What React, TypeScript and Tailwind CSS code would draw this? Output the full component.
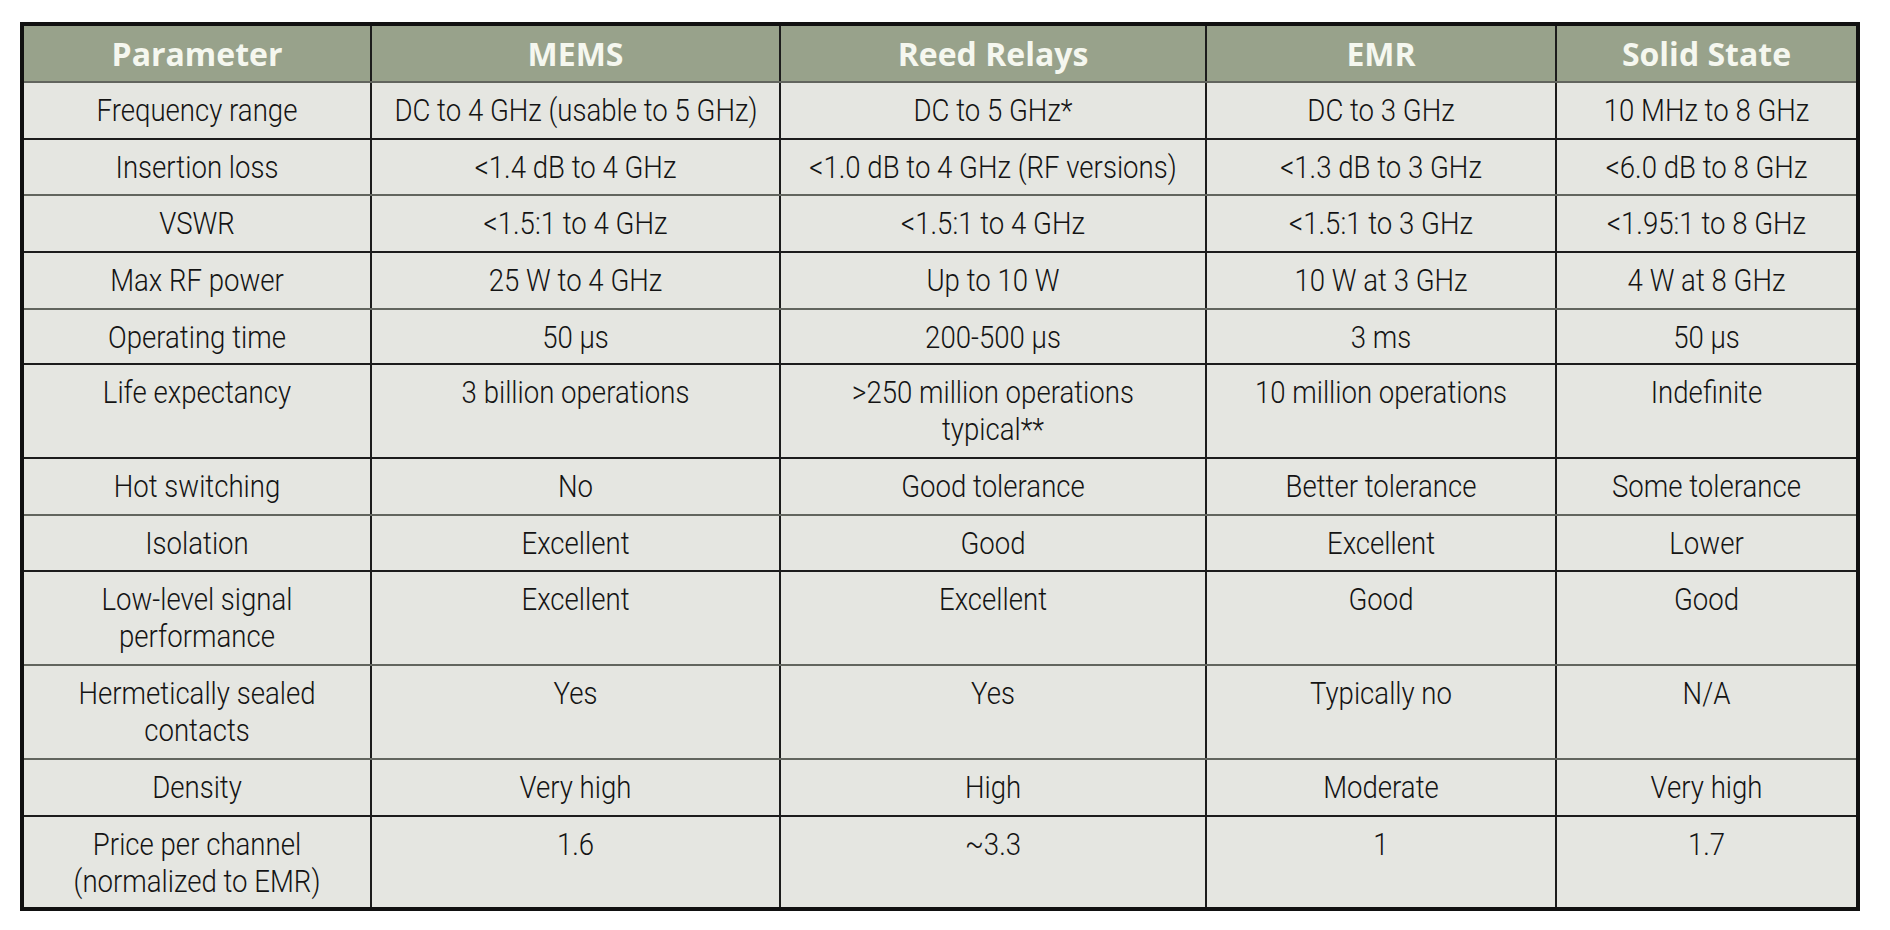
const GREY = 'border-[#62655e]';
const DARK = 'border-[#1c1c1c]';

const cols = ['w-[346px]', 'w-[409px]', 'w-[426px]', 'w-[350px]', 'w-[301px]'];

type Row = { cells: string[][]; line: string; h: string };

const rows: Row[] = [
  { cells: [['Frequency range'], ['DC to 4 GHz (usable to 5 GHz)'], ['DC to 5 GHz*'], ['DC to 3 GHz'], ['10 MHz to 8 GHz']], line: GREY, h: 'h-[56.5px]' },
  { cells: [['Insertion loss'], ['<1.4 dB to 4 GHz'], ['<1.0 dB to 4 GHz (RF versions)'], ['<1.3 dB to 3 GHz'], ['<6.0 dB to 8 GHz']], line: DARK, h: 'h-[56.5px]' },
  { cells: [['VSWR'], ['<1.5:1 to 4 GHz'], ['<1.5:1 to 4 GHz'], ['<1.5:1 to 3 GHz'], ['<1.95:1 to 8 GHz']], line: GREY, h: 'h-[57px]' },
  { cells: [['Max RF power'], ['25 W to 4 GHz'], ['Up to 10 W'], ['10 W at 3 GHz'], ['4 W at 8 GHz']], line: DARK, h: 'h-[56.5px]' },
  { cells: [['Operating time'], ['50 µs'], ['200-500 µs'], ['3 ms'], ['50 µs']], line: GREY, h: 'h-[55.5px]' },
  { cells: [['Life expectancy'], ['3 billion operations'], ['>250 million operations', 'typical**'], ['10 million operations'], ['Indefinite']], line: DARK, h: 'h-[94px]' },
  { cells: [['Hot switching'], ['No'], ['Good tolerance'], ['Better tolerance'], ['Some tolerance']], line: DARK, h: 'h-[56.5px]' },
  { cells: [['Isolation'], ['Excellent'], ['Good'], ['Excellent'], ['Lower']], line: GREY, h: 'h-[56.5px]' },
  { cells: [['Low-level signal', 'performance'], ['Excellent'], ['Excellent'], ['Good'], ['Good']], line: DARK, h: 'h-[94px]' },
  { cells: [['Hermetically sealed', 'contacts'], ['Yes'], ['Yes'], ['Typically no'], ['N/A']], line: GREY, h: 'h-[94px]' },
  { cells: [['Density'], ['Very high'], ['High'], ['Moderate'], ['Very high']], line: GREY, h: 'h-[57px]' },
  { cells: [['Price per channel', '(normalized to EMR)'], ['1.6'], ['~3.3'], ['1'], ['1.7']], line: DARK, h: 'h-[92px]' },
];

const headers = ['Parameter', 'MEMS', 'Reed Relays', 'EMR', 'Solid State'];

export default function App() {
  return (
    <div className="w-[1890px] h-[930px] bg-white pt-[22px] pl-[20px]">
      <div className="w-[1840px] border-[4px] border-[#111111] bg-[#e5e6e1]">
        {/* header */}
        <div className="flex h-[55px] bg-[#98a28b]">
          {headers.map((h, i) => (
            <div
              key={h}
              className={`${cols[i]} ${i > 0 ? 'border-l-2 border-[#1c1c1c]' : ''} flex items-center justify-center text-[32px] font-bold text-[#f5f7ef] font-['Open_Sans',sans-serif]`}
            >
              {h}
            </div>
          ))}
        </div>
        {rows.map((r, ri) => (
          <div key={ri} className={`flex border-t-2 ${r.line} ${r.h}`}>
            {r.cells.map((c, ci) => (
              <div
                key={ci}
                className={`${cols[ci]} ${ci > 0 ? 'border-l-2 border-l-[#1c1c1c]' : ''} pt-[9px] text-center text-[31px] leading-[37px] font-light text-[#141414] font-['Roboto',sans-serif] whitespace-nowrap`}
              >
                <div className="scale-x-[0.89]">
                  {c.map((line) => (
                    <div key={line}>{line}</div>
                  ))}
                </div>
              </div>
            ))}
          </div>
        ))}
      </div>
    </div>
  );
}
